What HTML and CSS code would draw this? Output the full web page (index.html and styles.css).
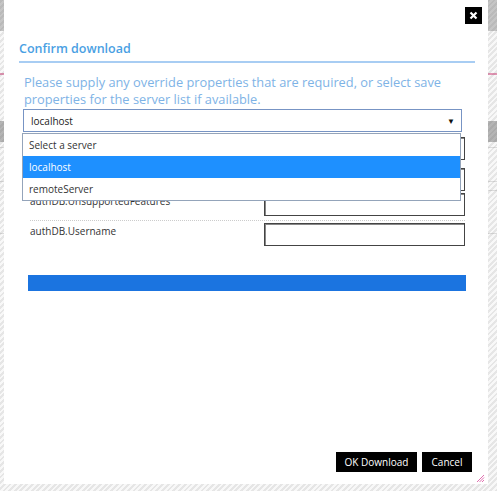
FILE: index.html
```html
<!DOCTYPE html>
<html lang="en">
<head>
    <meta charset="UTF-8">
    <meta name="viewport" content="width=device-width, initial-scale=1.0">
    <title>Confirm download</title>
    <link rel="stylesheet" href="styles.css">
</head>
<body>
    <!-- page behind the dialog -->
    <div class="page">
        <div class="page-header"></div>
        <div class="page-accent"></div>
        <div class="page-toolbar"></div>
        <div class="page-line line-a"></div>
        <div class="page-line line-b"></div>
        <div class="page-line line-c"></div>
        <div class="page-line line-d"></div>
    </div>
    <div class="overlay"></div>

    <div class="modal">
        <button class="close-btn" aria-label="Close">
            <svg width="9" height="9" viewBox="0 0 9 9"><path d="M1.5 1.5 L7.5 7.5 M7.5 1.5 L1.5 7.5" stroke="#fff" stroke-width="2.2"/></svg>
        </button>
        <h2 class="modal-title">Confirm download</h2>
        <p class="intro">Please supply any override properties that are required, or select save properties for the server list if available.</p>

        <div class="server-select">
            <div class="select-box">
                <span>localhost</span>
                <span class="arrow">&#9660;</span>
            </div>
            <ul class="select-list">
                <li>Select a server</li>
                <li class="selected">localhost</li>
                <li>remoteServer</li>
            </ul>
        </div>

        <div class="props">
            <div class="prop-row row-1">
                <label>authDB.Password</label>
                <input type="text">
            </div>
            <div class="prop-row row-2">
                <label>authDB.Server</label>
                <input type="text">
            </div>
            <div class="prop-row row-3">
                <label>authDB.UnsupportedFeatures</label>
                <input type="text">
            </div>
            <div class="prop-row row-4">
                <label>authDB.Username</label>
                <input type="text">
            </div>
        </div>

        <div class="progress-bar"></div>

        <div class="modal-footer">
            <button class="btn btn-ok">OK Download</button>
            <button class="btn btn-cancel">Cancel</button>
        </div>
        <svg class="grip" width="9" height="9" viewBox="0 0 9 9">
            <path d="M8 1 L1 8 M8 3.5 L3.5 8 M8 6 L6 8" stroke="#e070b0" stroke-width="1"/>
        </svg>
    </div>
</body>
</html>
```

FILE: styles.css
```css
body {
    margin: 0;
    font-family: "Open Sans", Arial, sans-serif;
    background: #f6f6f6;
    height: 491px;
    overflow: hidden;
}
.page-header {
    height: 31px;
    background: #b2b2b2;
}
.page-accent {
    height: 2px;
    margin-top: 42px;
    background: #d9709a;
}
.page-toolbar {
    height: 21px;
    margin-top: 46px;
    background: #9c9c9c;
}
.page-line {
    height: 1px;
    background: #cfcfcf;
}
.line-a { margin-top: 5px; }
.line-b { margin-top: 33px; }
.line-c { margin-top: 8px; }
.line-d { margin-top: 42px; }

.overlay {
    position: fixed;
    inset: 0;
    background: repeating-linear-gradient(-45deg, rgba(200, 200, 200, 0.35) 0, rgba(200, 200, 200, 0.35) 2px, rgba(255, 255, 255, 0.25) 2px, rgba(255, 255, 255, 0.25) 4px);
}

.modal {
    position: absolute;
    left: 4px;
    top: 0;
    width: 484px;
    height: 484px;
    background: #fff;
    box-sizing: border-box;
    padding: 0 13px 0 15px;
}
.close-btn {
    position: absolute;
    top: 7px;
    right: 6px;
    width: 17px;
    height: 17px;
    padding: 0;
    border: none;
    background: #000;
    display: flex;
    align-items: center;
    justify-content: center;
}
.modal-title {
    margin: 39px 0 0;
    padding-bottom: 3px;
    font-size: 12.5px;
    font-weight: 600;
    color: #4a9fe3;
    border-bottom: 2px solid #a8cdf3;
    line-height: 19px;
}
.intro {
    margin: 11px 0 0 5px;
    font-size: 12.8px;
    line-height: 17px;
    color: #7eb3e6;
}

.server-select {
    position: relative;
    margin: 1px 0 0 4px;
    width: 439px;
}
.select-box {
    height: 23px;
    box-sizing: border-box;
    border: 1px solid #7794c4;
    display: flex;
    align-items: center;
    justify-content: space-between;
    padding: 0 6px 0 7px;
    font-size: 10px;
    color: #222;
}
.arrow {
    font-size: 8px;
    color: #111;
}
.select-list {
    position: absolute;
    z-index: 2;
    top: 24px;
    left: -1px;
    width: 439px;
    margin: 0;
    padding: 0;
    list-style: none;
    background: #fff;
    border: 1px solid #94a4ba;
    box-sizing: border-box;
}
.select-list li {
    height: 22px;
    line-height: 22px;
    padding-left: 6px;
    font-size: 10px;
    color: #333;
}
.select-list li.selected {
    background: #1e90ff;
    color: #fff;
}

.props {
    margin-left: 11px;
    width: 435px;
}
.prop-row {
    display: flex;
    justify-content: space-between;
    align-items: flex-start;
}
.prop-row label {
    font-size: 10px;
    color: #333;
    padding-top: 1px;
}
.prop-row input {
    width: 201px;
    height: 23px;
    box-sizing: border-box;
    border: 1px solid #444;
    box-shadow: inset 1px 1px 0 #888;
    margin: 0;
}
.row-1 { margin-top: 5px; }
.row-2 { margin-top: 8px; }
.row-3 { margin-top: 2px; padding-bottom: 4px; border-bottom: 1px dotted #ccc; }
.row-4 { margin-top: 2px; }

.progress-bar {
    margin: 29px 0 0 9px;
    width: 438px;
    height: 16px;
    background: #1b74e0;
}

.modal-footer {
    position: absolute;
    right: 16px;
    bottom: 12px;
    display: flex;
    gap: 5px;
}
.btn {
    height: 20px;
    padding: 0;
    border: none;
    background: #000;
    color: #fff;
    font-family: "Open Sans", Arial, sans-serif;
    font-size: 10px;
    white-space: nowrap;
}
.btn-ok { width: 81px; }
.btn-cancel { width: 50px; }
.grip {
    position: absolute;
    right: 3px;
    bottom: 1px;
}
```
